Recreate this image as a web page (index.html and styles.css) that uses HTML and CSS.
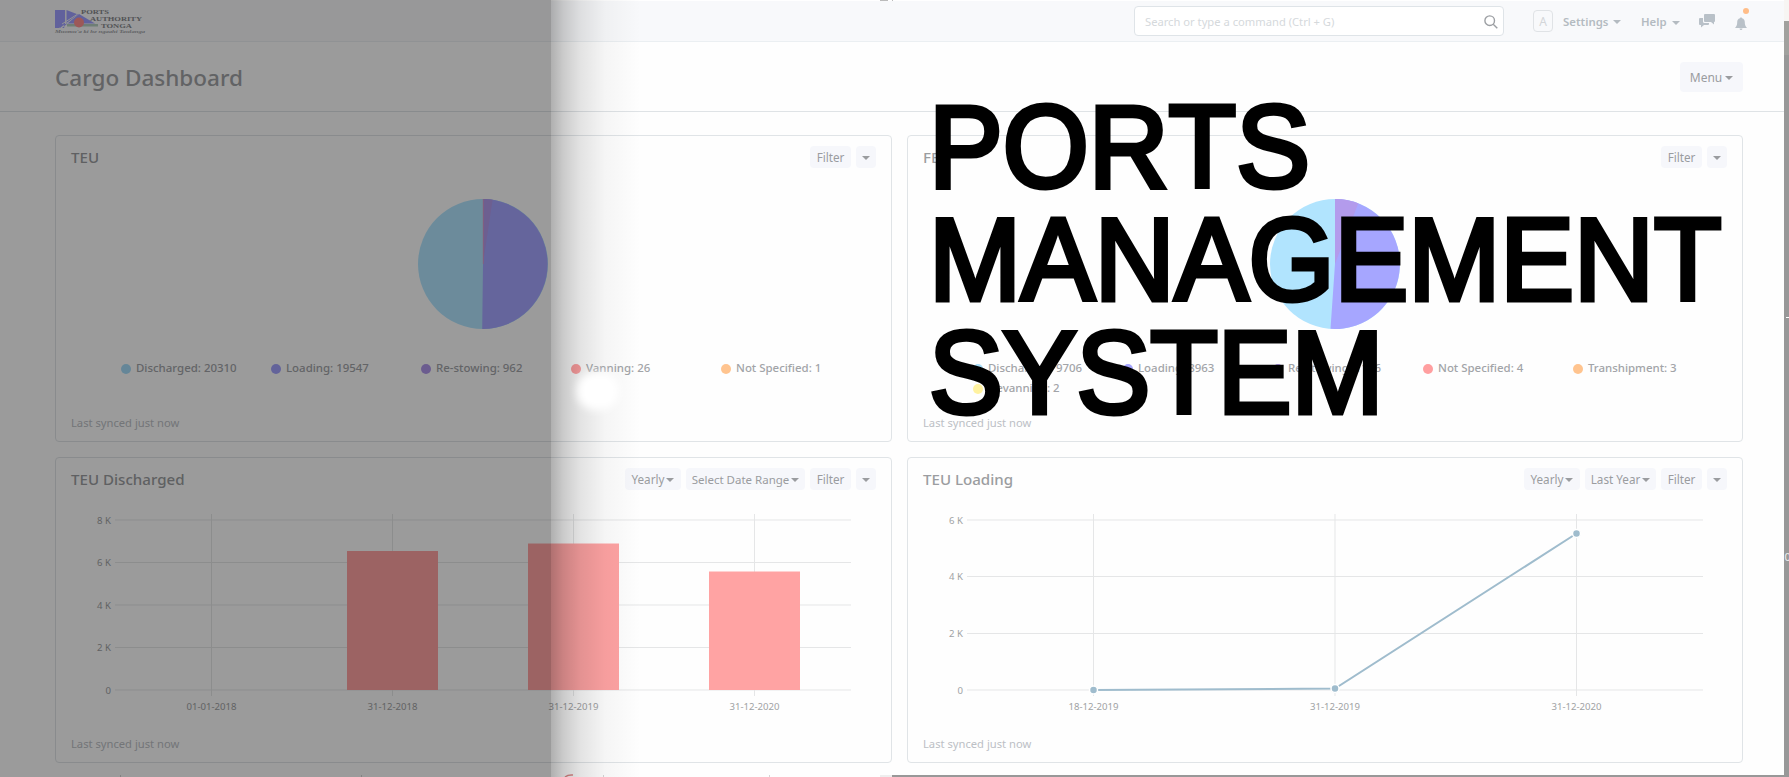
FILE: index.html
```html
<!DOCTYPE html>
<html lang="en">
<head>
<meta charset="utf-8">
<title>Cargo Dashboard</title>
<link rel="stylesheet" href="styles.css">
</head>
<body>
<div class="screen">
  <header class="navbar">
    <svg class="logo" width="92" height="30" viewBox="0 0 92 30">
      <path fill="#9f9fff" d="M0 1h10v14l-5 4h5v-1H9v1l-4 0zM0 1h10v14L4 19h5v0H0zM11.500 1L23 5.500 11.500 14zM0 19h7L24 5l16 9.500H8l2 4.500H0z"/>
      <rect x="12" y="15" width="31" height="2.500" fill="#b5cfc0"/>
      <path d="M10.500 1v14M7 15l15-9.500" stroke="#f0f1f5" fill="none"/>
      <circle cx="24" cy="13.500" r="5" fill="#ff9090"/>
      <g class="logo-name">
        <text x="26" y="4.500" textLength="28" lengthAdjust="spacingAndGlyphs">PORTS</text>
        <text x="35" y="11.500" textLength="52" lengthAdjust="spacingAndGlyphs">AUTHORITY</text>
        <text x="46" y="18.500" textLength="31" lengthAdjust="spacingAndGlyphs">TONGA</text>
      </g>
      <text class="logo-motto" x="0" y="24" textLength="90" lengthAdjust="spacingAndGlyphs">Muomu'a ki he ngaahi Taulanga</text>
    </svg>
    <div class="nav-right">
      <div class="search"><span>Search or type a command (Ctrl + G)</span>
        <svg width="14" height="14" viewBox="0 0 14 14"><circle cx="5.700" cy="5.700" r="4.800"/><path d="M9.200 9.200L13.300 13.300"/></svg>
      </div>
      <div class="avatar">A</div>
      <div class="nav-item settings">Settings<i class="caret"></i></div>
      <div class="nav-item help">Help<i class="caret"></i></div>
      <svg class="chat" width="16" height="14" viewBox="0 0 16 14"><path d="M6 0h9q1 0 1 1v6q0 1-1 1v2.500L12 8H6q-1 0-1-1V1q0-1 1-1z"/><path d="M1 4h3v3.500q0 1.500 1.500 1.500H10v1q0 1-1 1H5l-3 2.500V11H1q-1 0-1-1V5q0-1 1-1z"/></svg>
      <div class="bell"><svg width="12" height="14" viewBox="0 0 12 14"><path d="M6 0l1 1.300c2 .5 2.800 2 2.800 4C9.800 8 10.500 9.500 12 11H0c1.500-1.500 2.200-3 2.200-5.700 0-2 .8-3.500 2.800-4zM4.500 11.500h3Q7.300 13 6 13T4.500 11.500z"/></svg><i class="dot"></i></div>
    </div>
  </header>
  <div class="page-head">
    <h1>Cargo Dashboard</h1>
    <div class="menu">Menu<i class="caret"></i></div>
  </div>
  <main class="cards">
    <section class="card">
      <div class="card-head"><h2>TEU</h2><div class="btns"><span class="btn filter">Filter</span><span class="btn drop"><i class="caret"></i></span></div></div>
      <svg class="pie" width="130" height="130" viewBox="-65 -65 130 130">
        <circle r="65" fill="#b1e4fe"/>
        <path fill="#a6a6ff" d="M0 0V-65A65 65 0 1 1 -.800 65z"/>
        <path fill="#b39bec" d="M0 0V-65A65 65 0 0 1 9.600 -64.300z"/>
        <path stroke="#e69bc4" stroke-width=".8" d="M.300 0V-65"/>
      </svg>
      <ul class="legend">
        <li class="sky">Discharged: 20310</li><li class="blue">Loading: 19547</li><li class="purple">Re-stowing: 962</li><li class="red">Vanning: 26</li><li class="orange">Not Specified: 1</li>
      </ul>
      <footer>Last synced just now</footer>
    </section>
    <section class="card">
      <div class="card-head"><h2>FEU</h2><div class="btns"><span class="btn filter">Filter</span><span class="btn drop"><i class="caret"></i></span></div></div>
      <svg class="pie" width="130" height="130" viewBox="-65 -65 130 130">
        <circle r="65" fill="#b1e4fe"/>
        <path fill="#a6a6ff" d="M0 0V-65A65 65 0 1 1 -4.500 64.850z"/>
        <path fill="#b39bec" d="M0 0V-65A65 65 0 0 1 23.300 -60.700z"/>
      </svg>
      <ul class="legend">
        <li class="sky">Discharged: 9706</li><li class="blue">Loading: 8963</li><li class="purple">Re-stowing: 1176</li><li class="red">Not Specified: 4</li><li class="orange">Transhipment: 3</li><li class="yellow">Devanning: 2</li>
      </ul>
      <footer>Last synced just now</footer>
    </section>
    <section class="card">
      <div class="card-head"><h2>TEU Discharged</h2><div class="btns"><span class="btn yearly">Yearly<i class="caret"></i></span><span class="btn range">Select Date Range<i class="caret"></i></span><span class="btn filter">Filter</span><span class="btn drop"><i class="caret"></i></span></div></div>
      <svg class="chart" width="835" height="220" viewBox="56 500 835 220">
        <path class="grid" d="M115 520H851M115 562.500H851M115 605H851M115 647.500H851M115 690H851M211.500 514V696M392.500 514V696M573.500 514V696M754.500 514V696"/>
        <path class="bars" d="M347 551h91v139h-91zM528 543.500h91V690h-91zM709 571.500h91V690h-91z"/>
        <g class="ylab"><text x="111" y="523.500">8 K</text><text x="111" y="566">6 K</text><text x="111" y="608.500">4 K</text><text x="111" y="651">2 K</text><text x="111" y="693.500">0</text></g>
        <g class="xlab"><text x="211.500" y="710">01-01-2018</text><text x="392.500" y="710">31-12-2018</text><text x="573.500" y="710">31-12-2019</text><text x="754.500" y="710">31-12-2020</text></g>
      </svg>
      <footer>Last synced just now</footer>
    </section>
    <section class="card">
      <div class="card-head"><h2>TEU Loading</h2><div class="btns"><span class="btn yearly">Yearly<i class="caret"></i></span><span class="btn last">Last Year<i class="caret"></i></span><span class="btn filter">Filter</span><span class="btn drop"><i class="caret"></i></span></div></div>
      <svg class="chart" width="834" height="220" viewBox="908 500 834 220">
        <path class="grid" d="M967 520H1703M967 576.500H1703M967 633.500H1703M967 690H1703M1093.500 514V696M1335 514V696M1576.500 514V696"/>
        <path class="line" d="M1093.500 690L1335 688.500L1576.500 533.500"/>
        <g class="points"><circle cx="1093.500" cy="690" r="4"/><circle cx="1335" cy="688.500" r="4"/><circle cx="1576.500" cy="533.500" r="4"/></g>
        <g class="ylab"><text x="963" y="523.500">6 K</text><text x="963" y="580">4 K</text><text x="963" y="636.500">2 K</text><text x="963" y="693.500">0</text></g>
        <g class="xlab"><text x="1093.500" y="710">18-12-2019</text><text x="1335" y="710">31-12-2019</text><text x="1576.500" y="710">31-12-2020</text></g>
      </svg>
      <footer>Last synced just now</footer>
    </section>
  </main>
  <svg class="edges" width="1789" height="777" viewBox="0 0 1789 777">
    <path fill="#fff" d="M551 0h1238v1H551z"/><path fill="#bbb" d="M880 0h8v1h-8zM892 0h1v1h-1z"/>
    <path fill="#f7f5f3" d="M1784 0h5v21h-5z"/><path fill="#a1a19e" d="M1784 21h5v34h-5z"/><path fill="#989898" d="M1784 55h5v722h-5zM892 775h897v2H892z"/>
    <path fill="#eee" d="M880 775h12v2h-12z"/><path fill="#d5d5d5" d="M120 775h1v2h-1zM361 775h1v2h-1zM603 775h1v2h-1zM769 775h1v2h-1z"/>
    <path fill="none" stroke="#e08a8a" stroke-width="1.500" d="M565 777q3-2.500 8-2"/>
    <path fill="#fff" d="M1786 317h3v1h-3z"/><text class="edge-digit" x="1784.500" y="561">0</text>
  </svg>
  <div class="shade"></div>
  <div class="shadow"></div>
  <div class="glow"></div>
  <div class="headline">PORTS<br>MANAGEMENT<br>SYSTEM</div>
</div>
</body>
</html>
```
FILE: styles.css
```css
* { box-sizing: border-box; }
body { margin: 0; background: #fff; }
.screen { position: relative; width: 1789px; height: 777px; overflow: hidden; background: #fefefe; font-family: "Noto Sans", sans-serif; color: #9a9c9f; }
.navbar { height: 42px; background: #f8f9fb; border-bottom: 1px solid #ebeff2; display: flex; justify-content: space-between; padding: 0 41px 0 55px; }
.logo { margin-top: 9px; overflow: visible; }
.logo-name { font: bold 6.500px "Liberation Serif", serif; fill: #87888c; }
.logo-motto { font: italic bold 5px "Liberation Serif", serif; fill: #a0a1a6; }
.nav-right { display: flex; align-items: flex-start; }
.search { width: 370px; height: 30px; margin-top: 6px; border: 1px solid #dfe4e8; border-radius: 4px; background: #fff; display: flex; align-items: center; justify-content: space-between; padding: 0 5px 0 10px; font-size: 11.200px; color: #d5d9dc; }
.search svg { fill: none; stroke: #9c9fa3; stroke-width: 1.400; margin-top: 1px; }
.avatar { width: 20px; height: 22px; margin: 10px 0 0 29px; border: 1px solid #e0e3e6; border-radius: 4px; text-align: center; font-size: 12px; line-height: 21px; color: #d3d6d9; }
.nav-item { font-size: 11.400px; font-weight: 600; line-height: 16px; margin-top: 14px; color: #b4bbc1; display: flex; align-items: center; justify-content: space-between; }
.settings { width: 58px; margin-left: 10px; }
.help { width: 39px; margin-left: 20px; }
.caret { display: inline-block; border: 4px solid transparent; border-top-color: currentColor; border-bottom: 0; flex: none; margin-top: 2px; }
.settings .caret { margin-top: -1px; }
.chat { margin: 14px 0 0 19px; fill: #b9c1c8; }
.bell { position: relative; margin: 14px 0 0 20px; fill: #b9c1c8; width: 13px; }
.dot { position: absolute; left: 8px; top: -6px; width: 6px; height: 6px; border-radius: 50%; background: #ffbd88; }
.page-head { height: 70px; border-bottom: 1px solid #dfe3e6; padding: 0 46px 0 55px; display: flex; justify-content: space-between; align-items: flex-start; }
h1 { margin: 20px 0 0; font-size: 22.500px; line-height: 31px; font-weight: 500; color: #a0a2a5; }
.menu { width: 63px; height: 30px; margin-top: 20px; border-radius: 4px; background: #f6f7fb; font-size: 12px; display: flex; align-items: center; justify-content: center; gap: 3px; }
.cards { display: grid; grid-template-columns: 837px 836px; grid-template-rows: 307px 306px; gap: 15px; padding: 23px 0 0 55px; }
.card { border: 1px solid #e0e4e7; border-radius: 4px; display: flex; flex-direction: column; }
.card-head { height: 42px; flex: none; display: flex; justify-content: space-between; padding: 10px 15px 0; }
h2 { margin: 0; font-size: 15.100px; line-height: 22px; font-weight: 500; color: #9b9da0; }
.btns { display: flex; gap: 5px; }
.btn { height: 22px; border-radius: 4px; background: #f6f7fb; font-size: 11.700px; display: flex; align-items: center; justify-content: center; gap: 2px; white-space: nowrap; }
.filter { width: 41px; }
.drop { width: 20px; }
.yearly { width: 56px; }
.range { width: 119px; font-size: 11.500px; }
.last { width: 71px; }
.pie { margin: 21px 0 0 362px; flex: none; }
.legend { list-style: none; margin: 29px 0 0 65px; padding: 0; height: 40px; display: grid; grid-template-columns: repeat(5, 150px); grid-auto-rows: 20px; font-size: 11.450px; font-weight: 500; color: #a2a4a8; }
.legend li { display: flex; align-items: center; gap: 5px; white-space: nowrap; line-height: 20px; }
.legend li::before { content: ""; width: 10px; height: 10px; margin-top: 2px; border-radius: 50%; background: var(--dot); }
.sky { --dot: #a6dcf8; }
.blue { --dot: #a3a3fc; }
.purple { --dot: #b097ea; }
.red { --dot: #ff9fa0; }
.orange { --dot: #ffc48f; }
.yellow { --dot: #fff2a0; }
.card footer { margin: auto 0 10px 15px; font-size: 11.200px; line-height: 16px; color: #bcc0c5; }
.chart { margin-bottom: -30px; flex: none; }
.grid { fill: none; stroke: #e5e6e7; }
.bars { fill: #ffa3a3; }
.ylab, .xlab { font-size: 9.600px; fill: #a0a2a4; }
.ylab { text-anchor: end; }
.xlab { text-anchor: middle; }
.line { fill: none; stroke: #9fbccd; stroke-width: 2; }
.points { fill: #9fbccd; stroke: #fff; stroke-width: 1.500; }
.edges { position: absolute; left: 0; top: 0; }
.edge-digit { font-size: 11px; fill: #eee; }
.shade { position: absolute; left: 0; top: 0; width: 551px; height: 777px; background: rgba(0, 0, 0, .39); }
.shadow { position: absolute; left: 551px; top: 0; width: 90px; height: 777px; background: linear-gradient(90deg, rgba(0, 0, 0, .31), rgba(0, 0, 0, .2) 14%, rgba(0, 0, 0, .105) 33%, rgba(0, 0, 0, .035) 60%, transparent); }
.glow { position: absolute; left: 577px; top: 372px; width: 42px; height: 38px; border-radius: 45%; background: #fff; filter: blur(4px); }
.headline { position: absolute; left: 929px; top: 89.500px; font: 117px/113px "Liberation Sans", sans-serif; font-kerning: none; color: #000; -webkit-text-stroke: 5px #000; white-space: nowrap; transform: scaleX(.945); transform-origin: 0 0; }
```
